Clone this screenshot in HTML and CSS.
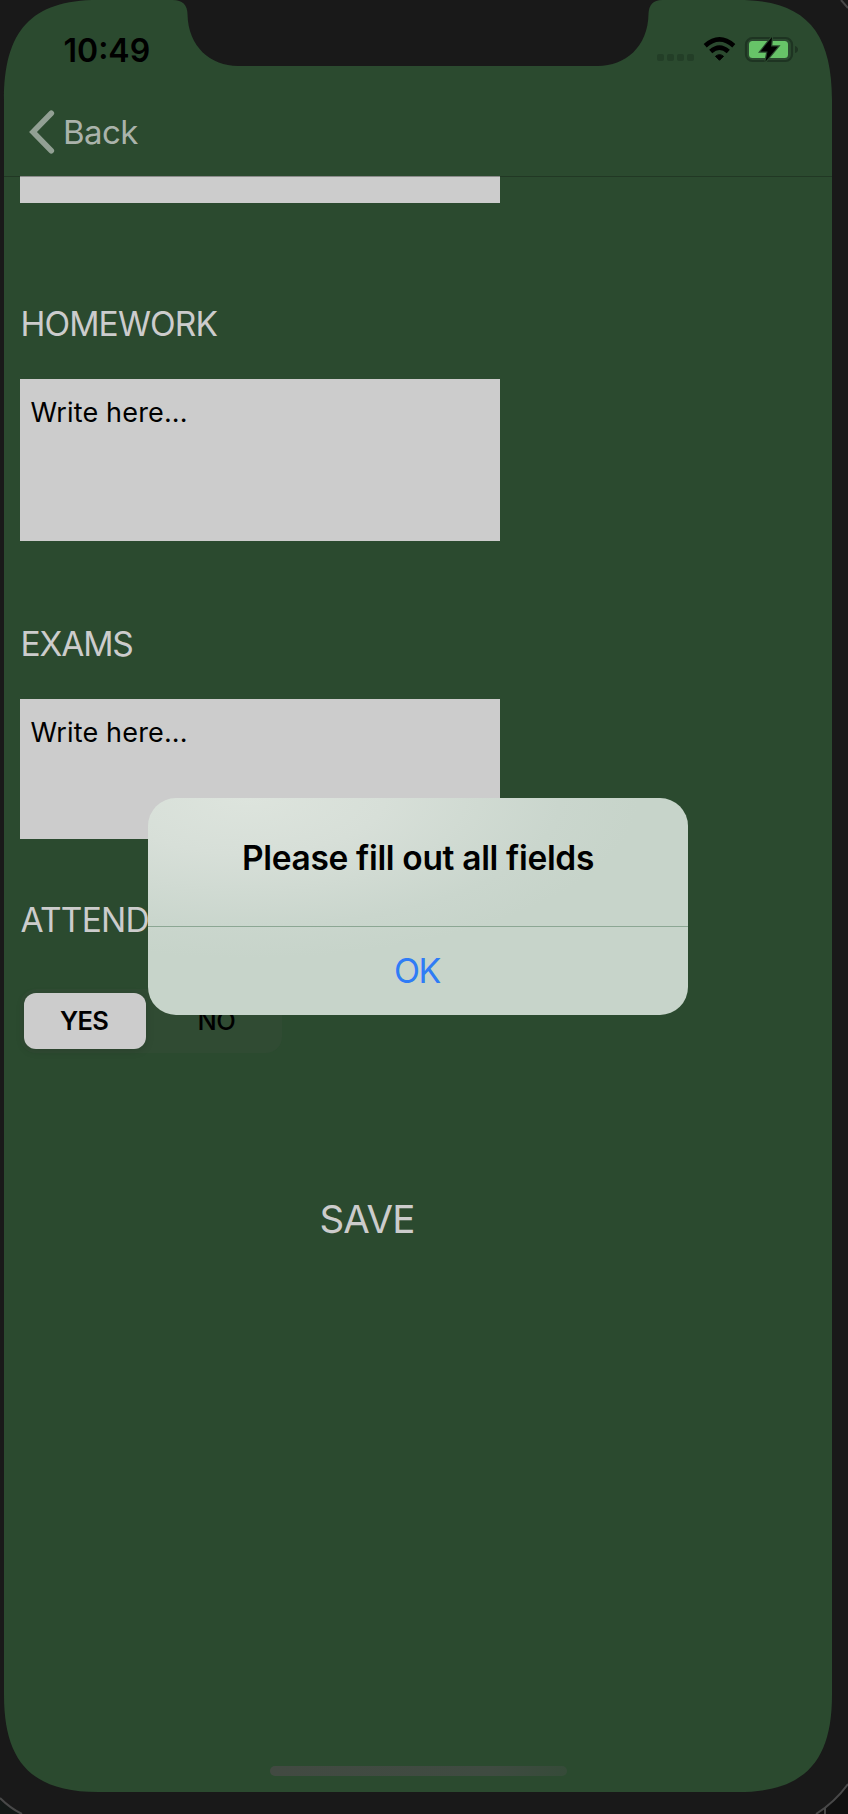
FILE: index.html
```html
<!DOCTYPE html>
<html lang="en">
<head>
<meta charset="utf-8">
<title>Class notes</title>
<link rel="stylesheet" href="styles.css">
</head>
<body>
<svg class="frame" viewBox="0 0 848 1814" width="848" height="1814">
  <rect width="848" height="1814" fill="#191919"/>
  <path d="M0 1798Q10 1808 22 1814H0Z" fill="#121816"/>
  <path d="M848 1784Q835 1802 816 1814H848Z" fill="#101010"/>
  <path d="M0 1798Q10 1808 22 1814M848 1784Q835 1802 816 1814M841 0L848 8M825 1808V1814" fill="none" stroke="#484848" stroke-width="2"/>
  <path d="M4 100C4 31 31 0 98 0H173Q187 0 187.500 14C188 47 211 66 238 66H598C625 66 648 47 648.500 14Q649 0 662 0H738C805 0 832 31 832 100V1695C832 1761 805 1792 738 1792H98C31 1792 4 1761 4 1695Z" fill="#2b4a2f"/>
</svg>
<div class="screen">
  <header class="status">
    <span class="time">10:49</span>
    <svg class="indicators" viewBox="0 0 148 32" width="148" height="32">
      <g fill="#233e27"><rect x="1" y="20" width="7" height="7" rx="2"/><rect x="11" y="20" width="7" height="7" rx="2"/><rect x="21" y="20" width="7" height="7" rx="2"/><rect x="31" y="20" width="7" height="7" rx="2"/></g>
      <g fill="none" stroke="#000" stroke-width="4.600"><path d="M49.200 11.700Q63.500-.8 77.800 11.700"/><path d="M54.700 17.500Q63.500 9.700 72.300 17.500"/></g>
      <path d="M59.500 22.300Q63.500 19 67.500 22.300L63.500 26.300Z" stroke="#000" stroke-width="1"/>
      <rect x="90" y="4" width="46" height="23" rx="6.500" fill="none" stroke="#1e3422" stroke-width="2.200"/>
      <rect x="93" y="7" width="39" height="17" rx="3.500" fill="#67c468"/>
      <path d="M139 12Q142 13 142 15.500T139 19Z" fill="#1e3422"/>
      <path d="M116 3L104.500 17.500H111.500L109.500 27.500L122 12.500H115Z" fill="#000" stroke="#2b4a2f" stroke-width="2.400" paint-order="stroke"/>
    </svg>
  </header>
  <nav class="nav">
    <svg viewBox="0 0 26 44" width="26" height="44"><path d="M22.300 3.200L4 22L22.300 40.800" fill="none" stroke="#92a094" stroke-width="5.600" stroke-linecap="round" stroke-linejoin="miter"/></svg>
    <span class="back">Back</span>
  </nav>
  <main class="form">
    <div class="field first"></div>
    <h2 class="label homework">HOMEWORK</h2>
    <div class="field tall">Write here...</div>
    <h2 class="label exams">EXAMS</h2>
    <div class="field short">Write here...</div>
    <h2 class="label attend">ATTENDANCE</h2>
    <div class="segments"><span class="segment on">YES</span><span class="segment off">NO</span></div>
    <div class="save"><span>SAVE</span></div>
  </main>
  <div class="home"></div>
</div>
<section class="alert">
  <div class="message"><span>Please fill out all fields</span></div>
  <div class="action"><span>OK</span></div>
</section>
</body>
</html>
```
FILE: styles.css
```css
*{box-sizing:border-box}
body{margin:0;width:848px;height:1814px;background:#191919;font-family:Inter,Roboto,sans-serif;position:relative;overflow:hidden}
svg{display:block}
.frame{position:absolute;left:0;top:0;z-index:-1}
.screen{margin:0 16px 0 4px;height:1792px;display:flex;flex-direction:column}
.status{height:88px;display:flex;justify-content:space-between;padding:34px 28px 0 59.5px}
.time{font-size:32px;line-height:33px;font-weight:600;letter-spacing:0}
.nav{height:89px;border-bottom:1px solid #213824;display:flex;align-items:center;gap:8px;padding-left:25px}
.back{font-size:33px;line-height:40px;color:#aab3ab;letter-spacing:-.6px}
.form{padding-left:16px;flex:1;display:flex;flex-direction:column}
.field{width:480px;background:#ccc;color:#000;font-size:27px;line-height:32px;padding:18px 10.5px;letter-spacing:.15px;flex:none}
.first{height:27px;margin-top:-1px;padding:0;border-top:1px solid #8b8b8b}
.tall{height:162px}
.short{height:140px}
.label{margin:0;height:40px;color:#ccc;font-size:33.500px;line-height:40px;font-weight:400;letter-spacing:-.85px;padding-left:.4px}
.homework{margin:101px 0 35px}
.exams{margin:83px 0 35px;letter-spacing:-1.1px}
.attend{margin:61px 0 49px;letter-spacing:-.75px}
.segments{width:262px;height:64px;display:flex;padding:4px;border-radius:16px;background:#304b33}
.segment{flex:1;display:flex;align-items:center;justify-content:center;font-size:25.500px;line-height:32px;border-radius:12px;font-weight:500;letter-spacing:-.4px}
.on{flex:0 0 122px;background:#ccc;box-shadow:0 2px 8px #0002;font-weight:600;letter-spacing:-.7px;padding-right:2px}
.off{padding-left:9px}
.save{margin-top:142px;width:694px;height:48px;display:flex;justify-content:center;color:#ccc;font-size:38.500px;line-height:48px;letter-spacing:-.8px}
.home{width:297px;height:10px;margin:0 0 16px 266px;border-radius:5px;background:linear-gradient(90deg,#424a42,#3f4b41 75%,#364b39)}
.alert{position:absolute;left:148px;top:798px;width:540px;height:217px;border-radius:28px;overflow:hidden;background:radial-gradient(ellipse 390px 160px at 100px 0,#dde4dd 0%,#d7dfd8 35%,#cad6cd 80%,#c7d4ca 100%)}
.message{height:129px;border-bottom:1px solid #8ca794;display:flex;justify-content:center;padding-top:40px;font-size:33.500px;line-height:40px;font-weight:600;letter-spacing:-.33px}
.action{height:88px;display:flex;align-items:center;justify-content:center;color:#2f7cf6;font-size:34px;line-height:40px;letter-spacing:-1.5px;padding-right:2px}
```
